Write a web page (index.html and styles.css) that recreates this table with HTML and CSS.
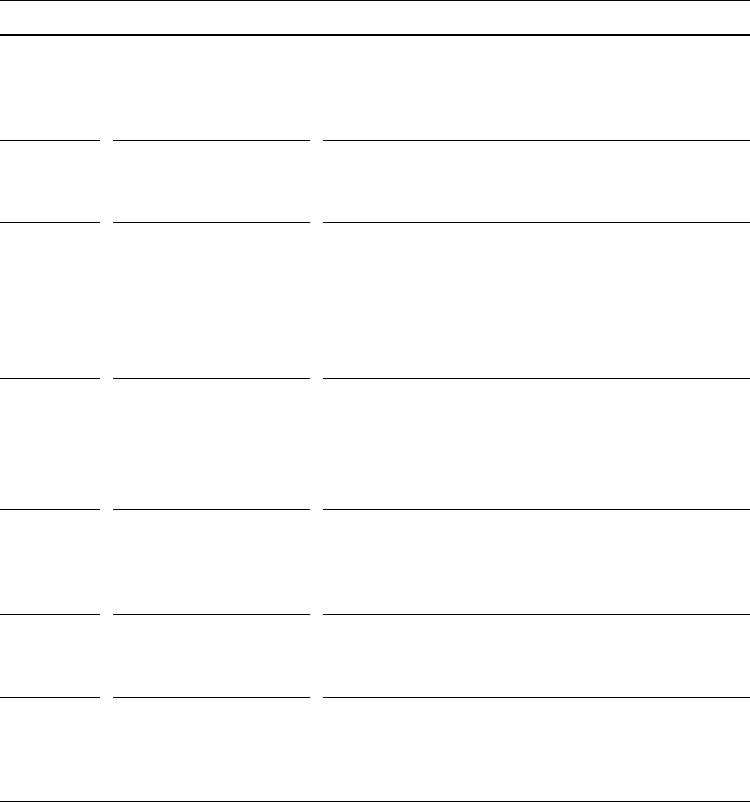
FILE: index.html
```html
<!DOCTYPE html>
<html>
<head>
<meta charset="utf-8">
<link rel="stylesheet" href="styles.css">
</head>
<body>
<div class="table">
  <div class="head"></div>
  <div class="row r1"><div class="cell"></div><div class="cell"></div><div class="cell"></div></div>
  <div class="row r2"><div class="cell"></div><div class="cell"></div><div class="cell"></div></div>
  <div class="row r3"><div class="cell"></div><div class="cell"></div><div class="cell"></div></div>
  <div class="row r4"><div class="cell"></div><div class="cell"></div><div class="cell"></div></div>
  <div class="row r5"><div class="cell"></div><div class="cell"></div><div class="cell"></div></div>
  <div class="row r6"><div class="cell"></div><div class="cell"></div><div class="cell"></div></div>
  <div class="row last r7"><div class="cell"></div><div class="cell"></div><div class="cell"></div></div>
</div>
</body>
</html>
```
FILE: styles.css
```css
html, body { margin: 0; padding: 0; background: #fff; }
body { font-family: "Liberation Serif", serif; }
.table { width: 750px; }
.head { border-top: 1px solid #000; border-bottom: 2px solid #000; height: 33px; }
.row { display: grid; grid-template-columns: 100px 197px 1fr; column-gap: 13px; }
.row .cell { border-bottom: 1px solid #000; }
.r1 .cell { height: 104px; }
.r2 .cell { height: 81px; }
.r3 .cell { height: 155px; }
.r4 .cell { height: 130px; }
.r5 .cell { height: 104px; }
.r6 .cell { height: 82px; }
.row.last { border-bottom: 1px solid #000; }
.row.last .cell { border-bottom: none; height: 103px; }
```
